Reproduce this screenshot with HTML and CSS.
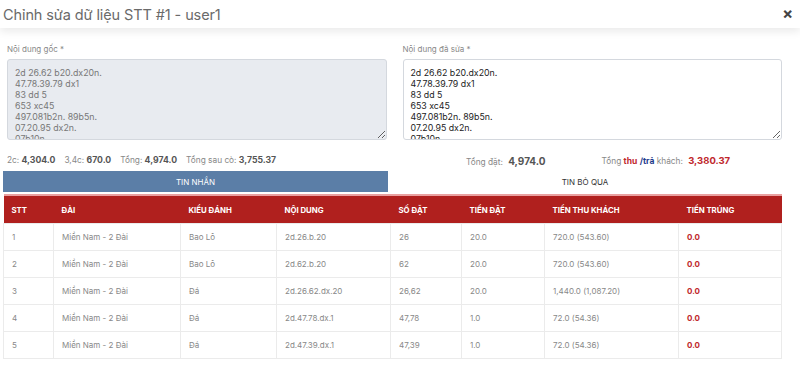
FILE: index.html
```html
<!DOCTYPE html>
<html lang="vi">
<head>
  <meta charset="UTF-8">
  <meta name="viewport" content="width=device-width, initial-scale=1.0">
  <title>Chỉnh sửa dữ liệu</title>
  <link rel="stylesheet" href="styles.css">
</head>
<body>
  <div class="modal-header">
    <h4 class="modal-title">Chỉnh sửa dữ liệu STT #1 - user1</h4>
    <span class="close">&times;</span>
  </div>

  <div class="modal-body">
    <div class="form-row">
      <div class="form-group">
        <label>Nội dung gốc *</label>
        <textarea class="input-text" readonly>2d 26.62 b20.dx20n.
47.78.39.79 dx1
83 dd 5
653 xc45
497.081b2n. 89b5n.
07.20.95 dx2n.
07b10n.</textarea>
      </div>
      <div class="form-group">
        <label>Nội dung đã sửa *</label>
        <textarea class="input-text edit">2d 26.62 b20.dx20n.
47.78.39.79 dx1
83 dd 5
653 xc45
497.081b2n. 89b5n.
07.20.95 dx2n.
07b10n.</textarea>
      </div>
    </div>

    <div class="summary">
      <div class="summary-left">
        <span>2c: <b>4,304.0</b></span>
        <span>3,4c: <b>670.0</b></span>
        <span>Tổng: <b>4,974.0</b></span>
        <span>Tổng sau cò: <b>3,755.37</b></span>
      </div>
      <div class="summary-right">
        <span class="total">Tổng đặt: <b>4,974.0</b></span>
        <span class="total">Tổng <b class="red">thu</b> <b class="blue">/trả</b> khách: <b class="red">3,380.37</b></span>
      </div>
    </div>

    <div class="tabs">
      <div class="tab active">TIN NHẮN</div>
      <div class="tab">TIN BỎ QUA</div>
    </div>

    <table class="data-table">
      <thead>
        <tr>
          <th class="c-stt">STT</th>
          <th class="c-dai">ĐÀI</th>
          <th class="c-kieu">KIỂU ĐÁNH</th>
          <th class="c-nd">NỘI DUNG</th>
          <th class="c-so">SỐ ĐẶT</th>
          <th class="c-tien">TIỀN ĐẶT</th>
          <th class="c-thu">TIỀN THU KHÁCH</th>
          <th class="c-trung">TIỀN TRÚNG</th>
        </tr>
      </thead>
      <tbody>
        <tr>
          <td>1</td><td>Miền Nam - 2 Đài</td><td>Bao Lô</td><td>2d.26.b.20</td>
          <td>26</td><td>20.0</td><td>720.0 (543.60)</td><td class="win">0.0</td>
        </tr>
        <tr>
          <td>2</td><td>Miền Nam - 2 Đài</td><td>Bao Lô</td><td>2d.62.b.20</td>
          <td>62</td><td>20.0</td><td>720.0 (543.60)</td><td class="win">0.0</td>
        </tr>
        <tr>
          <td>3</td><td>Miền Nam - 2 Đài</td><td>Đá</td><td>2d.26.62.dx.20</td>
          <td>26,62</td><td>20.0</td><td>1,440.0 (1,087.20)</td><td class="win">0.0</td>
        </tr>
        <tr>
          <td>4</td><td>Miền Nam - 2 Đài</td><td>Đá</td><td>2d.47.78.dx.1</td>
          <td>47,78</td><td>1.0</td><td>72.0 (54.36)</td><td class="win">0.0</td>
        </tr>
        <tr>
          <td>5</td><td>Miền Nam - 2 Đài</td><td>Đá</td><td>2d.47.39.dx.1</td>
          <td>47,39</td><td>1.0</td><td>72.0 (54.36)</td><td class="win">0.0</td>
        </tr>
      </tbody>
    </table>
  </div>
</body>
</html>
```

FILE: styles.css
```css
body {
  font-family: 'Inter', 'Noto Sans', sans-serif;
  margin: 0;
  padding: 0;
  background-color: #fff;
  color: #666;
  overflow: hidden;
}

.modal-header {
  display: flex;
  justify-content: space-between;
  align-items: center;
  height: 28px;
  padding: 0 7px 0 3px;
  box-shadow: 0 4px 8px rgba(0, 0, 0, 0.08);
  position: relative;
}

.modal-title {
  margin: 0;
  font-size: 14.5px;
  font-weight: 400;
  color: #6a6a6a;
  letter-spacing: -0.1px;
}

.close {
  font-size: 16px;
  font-weight: 700;
  color: #444;
  line-height: 1;
  margin-top: -2px;
}

.modal-body {
  padding: 16px 18px 0 3px;
}

.form-row {
  display: flex;
  gap: 16px;
  padding-left: 4px;
}

.form-group {
  flex: 1;
  display: flex;
  flex-direction: column;
}

label {
  font-size: 8px;
  color: #888;
  margin-bottom: 5px;
  line-height: 10px;
}

.input-text {
  height: 81px;
  box-sizing: border-box;
  padding: 7px 7px 6px;
  font-family: 'Inter', 'Noto Sans', sans-serif;
  font-size: 8.8px;
  line-height: 11px;
  color: #777;
  background-color: #e8ebf0;
  border: 1px solid #d4d8de;
  border-radius: 3px;
  resize: vertical;
  overflow: hidden;
}

.input-text.edit {
  background-color: #fff;
  color: #222;
}

.summary {
  display: flex;
  align-items: center;
  height: 22px;
  margin-top: 9px;
  padding-left: 4px;
  font-size: 8.3px;
  color: #888;
}

.summary b {
  color: #555;
  font-size: 8.7px;
}

.summary-left {
  display: flex;
  gap: 9px;
  width: 459px;
}

.summary-right {
  display: flex;
  gap: 56px;
  margin-top: 2px;
}

.total b {
  font-size: 10px;
  margin-left: 3px;
}

.total b.red,
.total b.blue {
  margin-left: 0;
  font-size: 8.5px;
}

.total b.red:last-child {
  font-size: 9.5px;
  margin-left: 3px;
}

.red {
  color: #c0282d !important;
}

.blue {
  color: #1f3c8c !important;
}

.tabs {
  display: flex;
  width: 779px;
  height: 21px;
  margin-top: 0;
}

.tab {
  flex: 1;
  display: flex;
  align-items: center;
  justify-content: center;
  font-size: 8px;
  color: #333;
}

.tab.active {
  flex: 0 0 385px;
  background-color: #5b7ea7;
  color: #fff;
}

.data-table {
  width: 779px;
  margin-top: 2px;
  border-collapse: collapse;
  border-top: 2px solid #e9a0a0;
  font-size: 8px;
  table-layout: fixed;
}

.data-table th {
  background-color: #b0201e;
  color: #fff;
  font-weight: 700;
  text-align: left;
  height: 27px;
  padding: 0 8px;
  font-size: 7.8px;
}

.data-table td {
  height: 26px;
  padding: 0 8px;
  color: #888;
  border: 1px solid #ebebeb;
}

.data-table td.win {
  color: #c0282d;
  font-weight: 700;
}

.c-stt { width: 34px; }
.c-dai { width: 111px; }
.c-kieu { width: 80px; }
.c-nd { width: 98px; }
.c-so { width: 55px; }
.c-tien { width: 67px; }
.c-thu { width: 118px; }
```
